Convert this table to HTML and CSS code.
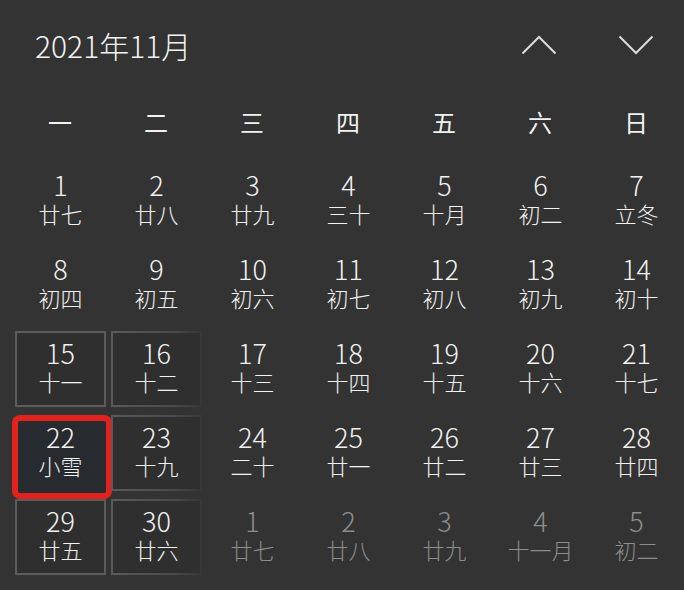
FILE: index.html
```html
<!DOCTYPE html>
<html lang="zh-CN">
<head>
<meta charset="utf-8">
<title>日历</title>
<link rel="stylesheet" href="styles.css">
</head>
<body>
<div class="calendar">
  <div class="header">
    <div class="title">2021年11月</div>
    <div class="nav">
      <svg class="chev" width="36" height="20" viewBox="0 0 36 20"><polyline points="1.5,18.5 18,2 34.5,18.5" /></svg>
      <svg class="chev" width="36" height="20" viewBox="0 0 36 20"><polyline points="1.5,1.5 18,18 34.5,1.5" /></svg>
    </div>
  </div>
  <div class="weekdays">
    <span>一</span><span>二</span><span>三</span><span>四</span><span>五</span><span>六</span><span>日</span>
  </div>
  <div class="grid">
    <div class="cell"><div class="box"><span class="num">1</span><span class="lunar">廿七</span></div></div>
    <div class="cell"><div class="box"><span class="num">2</span><span class="lunar">廿八</span></div></div>
    <div class="cell"><div class="box"><span class="num">3</span><span class="lunar">廿九</span></div></div>
    <div class="cell"><div class="box"><span class="num">4</span><span class="lunar">三十</span></div></div>
    <div class="cell"><div class="box"><span class="num">5</span><span class="lunar">十月</span></div></div>
    <div class="cell"><div class="box"><span class="num">6</span><span class="lunar">初二</span></div></div>
    <div class="cell"><div class="box"><span class="num">7</span><span class="lunar">立冬</span></div></div>

    <div class="cell"><div class="box"><span class="num">8</span><span class="lunar">初四</span></div></div>
    <div class="cell"><div class="box"><span class="num">9</span><span class="lunar">初五</span></div></div>
    <div class="cell"><div class="box"><span class="num">10</span><span class="lunar">初六</span></div></div>
    <div class="cell"><div class="box"><span class="num">11</span><span class="lunar">初七</span></div></div>
    <div class="cell"><div class="box"><span class="num">12</span><span class="lunar">初八</span></div></div>
    <div class="cell"><div class="box"><span class="num">13</span><span class="lunar">初九</span></div></div>
    <div class="cell"><div class="box"><span class="num">14</span><span class="lunar">初十</span></div></div>

    <div class="cell"><div class="box lit"><span class="num">15</span><span class="lunar">十一</span></div></div>
    <div class="cell"><div class="box lit fade"><span class="num">16</span><span class="lunar">十二</span></div></div>
    <div class="cell"><div class="box"><span class="num">17</span><span class="lunar">十三</span></div></div>
    <div class="cell"><div class="box"><span class="num">18</span><span class="lunar">十四</span></div></div>
    <div class="cell"><div class="box"><span class="num">19</span><span class="lunar">十五</span></div></div>
    <div class="cell"><div class="box"><span class="num">20</span><span class="lunar">十六</span></div></div>
    <div class="cell"><div class="box"><span class="num">21</span><span class="lunar">十七</span></div></div>

    <div class="cell"><div class="box sel"><span class="num">22</span><span class="lunar">小雪</span></div></div>
    <div class="cell"><div class="box lit fade"><span class="num">23</span><span class="lunar">十九</span></div></div>
    <div class="cell"><div class="box"><span class="num">24</span><span class="lunar">二十</span></div></div>
    <div class="cell"><div class="box"><span class="num">25</span><span class="lunar">廿一</span></div></div>
    <div class="cell"><div class="box"><span class="num">26</span><span class="lunar">廿二</span></div></div>
    <div class="cell"><div class="box"><span class="num">27</span><span class="lunar">廿三</span></div></div>
    <div class="cell"><div class="box"><span class="num">28</span><span class="lunar">廿四</span></div></div>

    <div class="cell"><div class="box lit"><span class="num">29</span><span class="lunar">廿五</span></div></div>
    <div class="cell"><div class="box lit fade"><span class="num">30</span><span class="lunar">廿六</span></div></div>
    <div class="cell other"><div class="box"><span class="num">1</span><span class="lunar">廿七</span></div></div>
    <div class="cell other"><div class="box"><span class="num">2</span><span class="lunar">廿八</span></div></div>
    <div class="cell other"><div class="box"><span class="num">3</span><span class="lunar">廿九</span></div></div>
    <div class="cell other"><div class="box"><span class="num">4</span><span class="lunar">十一月</span></div></div>
    <div class="cell other"><div class="box"><span class="num">5</span><span class="lunar">初二</span></div></div>
  </div>
</div>
</body>
</html>
```
FILE: styles.css
```css
html, body {
  margin: 0;
  padding: 0;
  background: #333333;
}
body {
  width: 684px;
  height: 590px;
  overflow: hidden;
  font-family: "Noto Sans CJK SC", "Noto Sans", sans-serif;
  color: #f2f2f2;
}
.calendar {
  width: 684px;
}
.header {
  height: 89px;
  display: flex;
  align-items: center;
  justify-content: space-between;
}
.title {
  margin-left: 35px;
  font-size: 30px;
  font-weight: 300;
  letter-spacing: 0;
  line-height: 40px;
}
.nav {
  display: flex;
  gap: 61px;
  margin-right: 30px;
}
.chev {
  display: block;
}
.chev polyline {
  fill: none;
  stroke: #dcdcdc;
  stroke-width: 2;
}
.weekdays {
  margin-left: 12px;
  height: 73px;
  display: grid;
  grid-template-columns: repeat(7, 96px);
  align-items: center;
  font-size: 24px;
  line-height: 30px;
}
.weekdays span {
  text-align: center;
  position: relative;
  top: -4px;
}
.grid {
  margin-left: 12px;
  display: grid;
  grid-template-columns: repeat(7, 96px);
  grid-auto-rows: 84px;
}
.cell {
  padding: 1px 2px 7px 3px;
}
.box {
  height: 100%;
  box-sizing: border-box;
  border: 2px solid transparent;
  display: flex;
  flex-direction: column;
  align-items: center;
  padding-top: 5px;
}
.num {
  font-size: 27px;
  font-weight: 300;
  line-height: 30px;
}
.lunar {
  font-size: 22px;
  font-weight: 300;
  line-height: 26px;
  margin-top: 0;
}
.box.lit {
  border-color: #5c5c5c;
  background: #2f2f2f;
}
.box.fade {
  border-image: linear-gradient(to right, #5a5a5a 0%, #4a4a4a 70%, #383838 100%) 1;
}
.box.sel {
  border: 4px solid #e3211d;
  border-radius: 6px;
  box-shadow: 0 0 0 2px #e3211d;
  background: #272b2f;
  height: calc(100% + 4px);
  margin: 2px -4px 0 -1px;
  padding: 1px 3px 0 0;
}
.other {
  color: #8d8d8d;
}
```
